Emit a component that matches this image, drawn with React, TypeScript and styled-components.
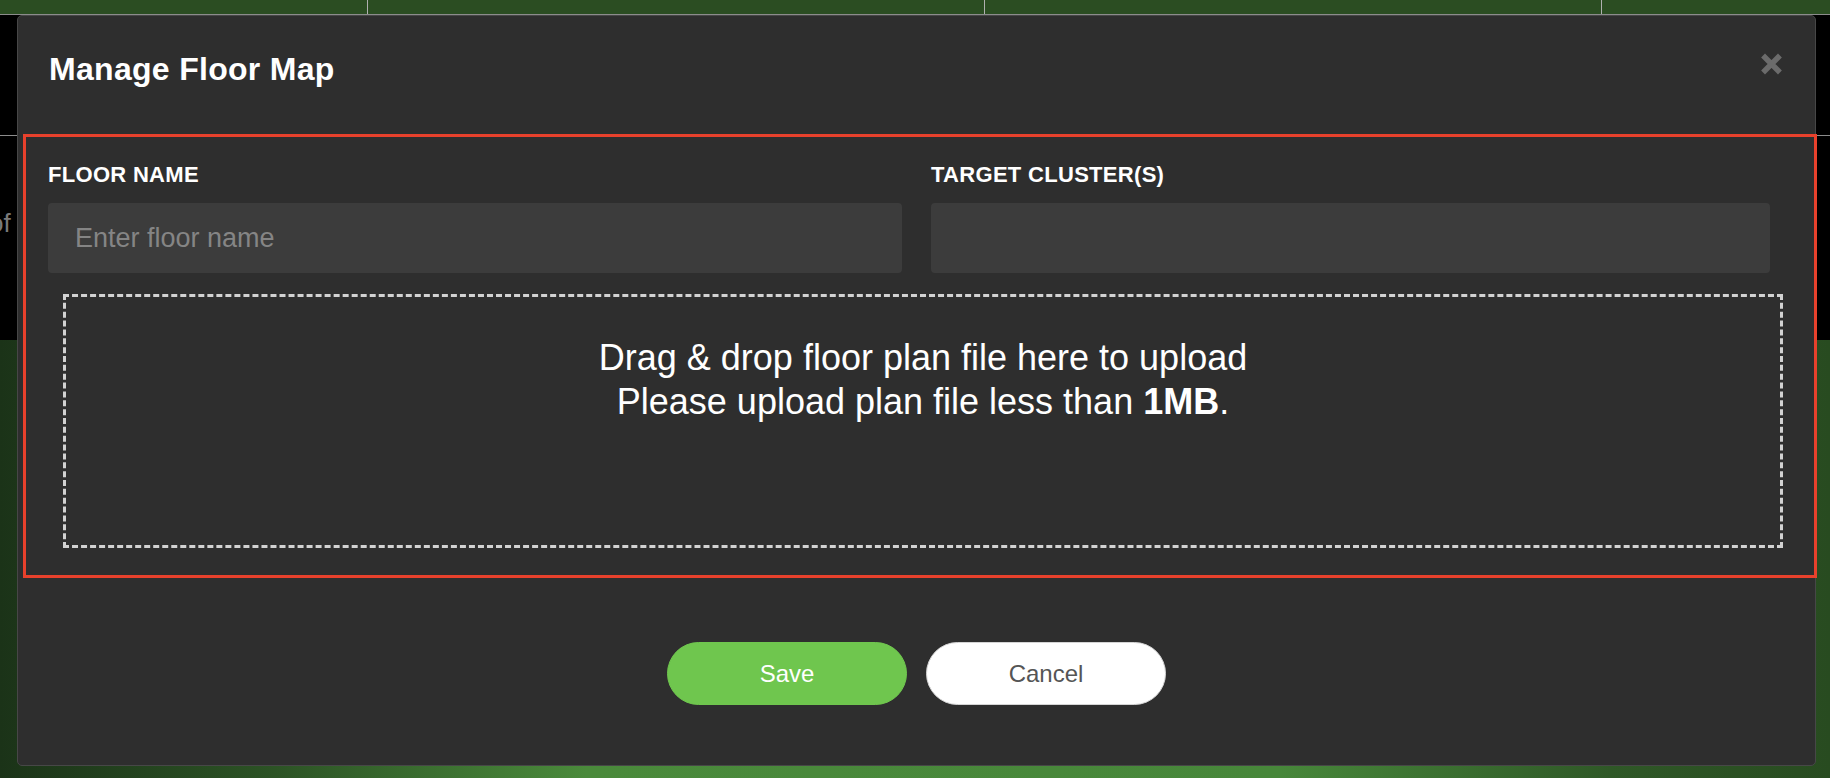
import styled, { createGlobalStyle } from 'styled-components';

const GlobalStyle = createGlobalStyle`
  html, body {
    margin: 0;
    padding: 0;
    background: #000;
  }
  body {
    font-family: "Liberation Sans", Arial, sans-serif;
  }
  #root {
    width: 1830px;
    height: 778px;
    overflow: hidden;
  }
`;

const Page = styled.div`
  position: relative;
  width: 1830px;
  height: 778px;
  display: flex;
  flex-direction: column;
  background: #000;
  overflow: hidden;
`;

const TopBar = styled.div`
  display: flex;
  height: 14px;
  background: #2b4d22;
  border-bottom: 1px solid #8c8c8c;
`;

const TopCell = styled.div<{ $w?: number }>`
  flex: ${({ $w }) => ($w ? 'none' : '1')};
  width: ${({ $w }) => ($w ? `${$w}px` : 'auto')};
  border-right: 1px solid #b0b0b0;

  &:last-child {
    border-right: none;
  }
`;

const BlackPanel = styled.div`
  height: 325px;
  display: flex;
  flex-direction: column;
  background: #000;
`;

const PanelHead = styled.div`
  height: 120px;
  border-bottom: 1px solid #8c8c8c;
`;

const PanelBody = styled.div`
  flex: 1;
  padding-top: 72px;
  margin-left: -11px;
  font-size: 26px;
  line-height: 30px;
  color: #7a7a7a;
`;

const GreenArea = styled.div`
  flex: 1;
  background: linear-gradient(
    90deg,
    #1b3318 0%,
    #2c5325 15%,
    #4a8a3b 32%,
    #47873a 70%,
    #2f5827 88%,
    #284b20 100%
  );
`;

const Modal = styled.div`
  position: absolute;
  top: 15px;
  left: 17px;
  width: 1799px;
  height: 751px;
  box-sizing: border-box;
  display: flex;
  flex-direction: column;
  background: #2e2e2e;
  border: 1px solid #474747;
  border-radius: 5px;
`;

const Header = styled.div`
  display: flex;
  justify-content: space-between;
  align-items: flex-start;
  height: 118px;
  box-sizing: border-box;
  padding: 35px 33px 0 31px;
`;

const Title = styled.h2`
  margin: 0;
  font-size: 32px;
  line-height: 37px;
  font-weight: 700;
  letter-spacing: 0.3px;
  color: #fff;
`;

const CloseButton = styled.button`
  display: block;
  width: 21px;
  height: 22px;
  margin-top: 2px;
  padding: 0;
  border: 0;
  background: none;
  color: #6b6b6b;
  cursor: pointer;

  svg {
    display: block;
    width: 21px;
    height: 22px;
  }
`;

const FormSection = styled.div`
  width: 1794px;
  height: 444px;
  box-sizing: border-box;
  margin-left: 5px;
  border: 3px solid #e8412c;
  padding: 25px 0 0 22px;
`;

const FieldRow = styled.div`
  display: grid;
  grid-template-columns: 854px 839px;
  column-gap: 29px;
`;

const Field = styled.div`
  display: flex;
  flex-direction: column;
`;

const Label = styled.label`
  margin-bottom: 16px;
  font-size: 22px;
  line-height: 25px;
  font-weight: 700;
  letter-spacing: 0.3px;
  color: #fff;
`;

const TextInput = styled.input`
  width: 100%;
  height: 70px;
  box-sizing: border-box;
  padding: 0 27px;
  border: 0;
  border-radius: 4px;
  background: #3c3c3c;
  font-family: inherit;
  font-size: 27px;
  color: #e0e0e0;
  outline: none;

  &::placeholder {
    color: #858585;
  }
`;

const DropZone = styled.div`
  width: 1720px;
  height: 254px;
  box-sizing: border-box;
  margin: 21px 0 0 15px;
  padding-top: 39px;
  border: 3px dashed #d2d2d2;
  text-align: center;
  font-size: 36px;
  line-height: 44px;
  color: #fff;

  strong {
    font-weight: 700;
  }
`;

const Footer = styled.div`
  display: flex;
  justify-content: center;
  gap: 19px;
  margin-top: 64px;
`;

const PillButton = styled.button<{ $primary?: boolean }>`
  width: 240px;
  height: 63px;
  box-sizing: border-box;
  border-radius: 32px;
  border: 1px solid ${({ $primary }) => ($primary ? '#6fc64e' : '#d4d4d4')};
  background: ${({ $primary }) => ($primary ? '#6fc64e' : '#fff')};
  color: ${({ $primary }) => ($primary ? '#fff' : '#555')};
  font-family: inherit;
  font-size: 24px;
  cursor: pointer;
`;

export default function App() {
  return (
    <>
      <GlobalStyle />
      <Page>
        <TopBar>
          <TopCell $w={367} />
          <TopCell $w={616} />
          <TopCell $w={616} />
          <TopCell />
        </TopBar>
        <BlackPanel>
          <PanelHead />
          <PanelBody>of</PanelBody>
        </BlackPanel>
        <GreenArea />

        <Modal>
          <Header>
            <Title>Manage Floor Map</Title>
            <CloseButton aria-label="Close">
              <svg viewBox="0 0 21 22" aria-hidden="true">
                <path
                  d="M4 4.5L17 17.5M17 4.5L4 17.5"
                  stroke="currentColor"
                  strokeWidth="5.5"
                  strokeLinecap="square"
                />
              </svg>
            </CloseButton>
          </Header>

          <FormSection>
            <FieldRow>
              <Field>
                <Label>FLOOR NAME</Label>
                <TextInput placeholder="Enter floor name" />
              </Field>
              <Field>
                <Label>TARGET CLUSTER(S)</Label>
                <TextInput />
              </Field>
            </FieldRow>
            <DropZone>
              Drag &amp; drop floor plan file here to upload
              <br />
              Please upload plan file less than <strong>1MB</strong>.
            </DropZone>
          </FormSection>

          <Footer>
            <PillButton $primary>Save</PillButton>
            <PillButton>Cancel</PillButton>
          </Footer>
        </Modal>
      </Page>
    </>
  );
}
